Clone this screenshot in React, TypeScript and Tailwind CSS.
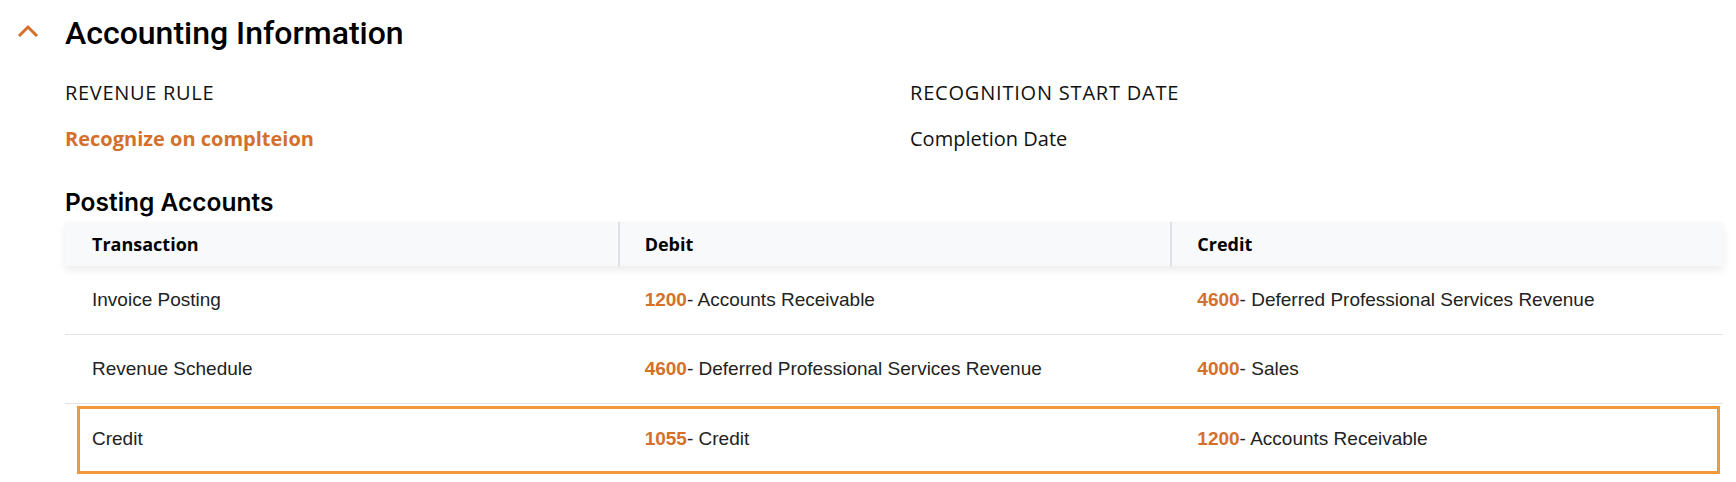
import React from 'react';

const rows = [
  {
    name: 'Invoice Posting',
    debit: { code: '1200', label: 'Accounts Receivable' },
    credit: { code: '4600', label: 'Deferred Professional Services Revenue' },
  },
  {
    name: 'Revenue Schedule',
    debit: { code: '4600', label: 'Deferred Professional Services Revenue' },
    credit: { code: '4000', label: 'Sales' },
  },
  {
    name: 'Credit',
    debit: { code: '1055', label: 'Credit' },
    credit: { code: '1200', label: 'Accounts Receivable' },
    selected: true,
  },
];

const Account = ({ code, label }: { code: string; label: string }) => (
  <span>
    <span className="font-bold text-[#d4702c]">{code}</span>- {label}
  </span>
);

const App: React.FC = () => {
  return (
    <div className="w-[1736px] h-[482px] bg-white overflow-hidden text-[#111]">
      {/* section header */}
      <div className="flex items-center pt-[13px] pl-[16px]">
        <svg width="24" height="14" viewBox="0 0 24 14" className="-mt-[5px]">
          <polyline points="3,12 12,3 21,12" fill="none" stroke="#d4702c" strokeWidth="3" />
        </svg>
        <h2 className="ml-[25px] text-[32px] leading-[40px] font-medium font-['Roboto',sans-serif] text-black">
          Accounting Information
        </h2>
      </div>

      <div className="ml-[65px] mr-[13px]">
        <div className="grid grid-cols-[845px_1fr] mt-[26px] font-['Open_Sans',sans-serif] text-[20px] leading-[28px]">
          <div>
            <div className="tracking-[0.7px]">REVENUE RULE</div>
            <div className="mt-[18px] font-bold text-[#d4702c]">Recognize on complteion</div>
          </div>
          <div>
            <div className="tracking-[0.8px]">RECOGNITION START DATE</div>
            <div className="mt-[18px]">Completion Date</div>
          </div>
        </div>

        <h3 className="mt-[33px] text-[24.5px] leading-[32px] font-semibold font-['Inter',sans-serif] text-black">
          Posting Accounts
        </h3>

        {/* posting accounts table */}
        <div className="mt-[4px]">
          <div className="relative z-10 grid grid-cols-3 h-[44px] bg-[#f8f9fb] shadow-[0_4px_8px_rgba(0,0,0,0.08)] font-['Open_Sans',sans-serif] text-[18px] font-bold text-black">
            <div className="flex items-center pl-[27px]">Transaction</div>
            <div className="flex items-center pl-[25px] border-l-2 border-[#dfe0e6]">Debit</div>
            <div className="flex items-center pl-[25px] border-l-2 border-[#dfe0e6]">Credit</div>
          </div>

          {rows.map((row) => (
            <div
              key={row.name}
              className={`relative grid grid-cols-3 h-[69px] items-center font-['Liberation_Sans',Arial,sans-serif] text-[19px] leading-[24px] text-[#222] ${
                row.selected ? '' : 'border-b border-[#e3e3e3]'
              }`}
            >
              <div className="pl-[27px]">{row.name}</div>
              <div className="pl-[27px]">
                <Account {...row.debit} />
              </div>
              <div className="pl-[27px]">
                <Account {...row.credit} />
              </div>
              {row.selected && (
                <div className="absolute left-[12px] right-[3px] top-[2px] bottom-[-1px] border-[3px] border-[#f0983a] pointer-events-none"></div>
              )}
            </div>
          ))}
        </div>
      </div>
    </div>
  );
};

export default App;
